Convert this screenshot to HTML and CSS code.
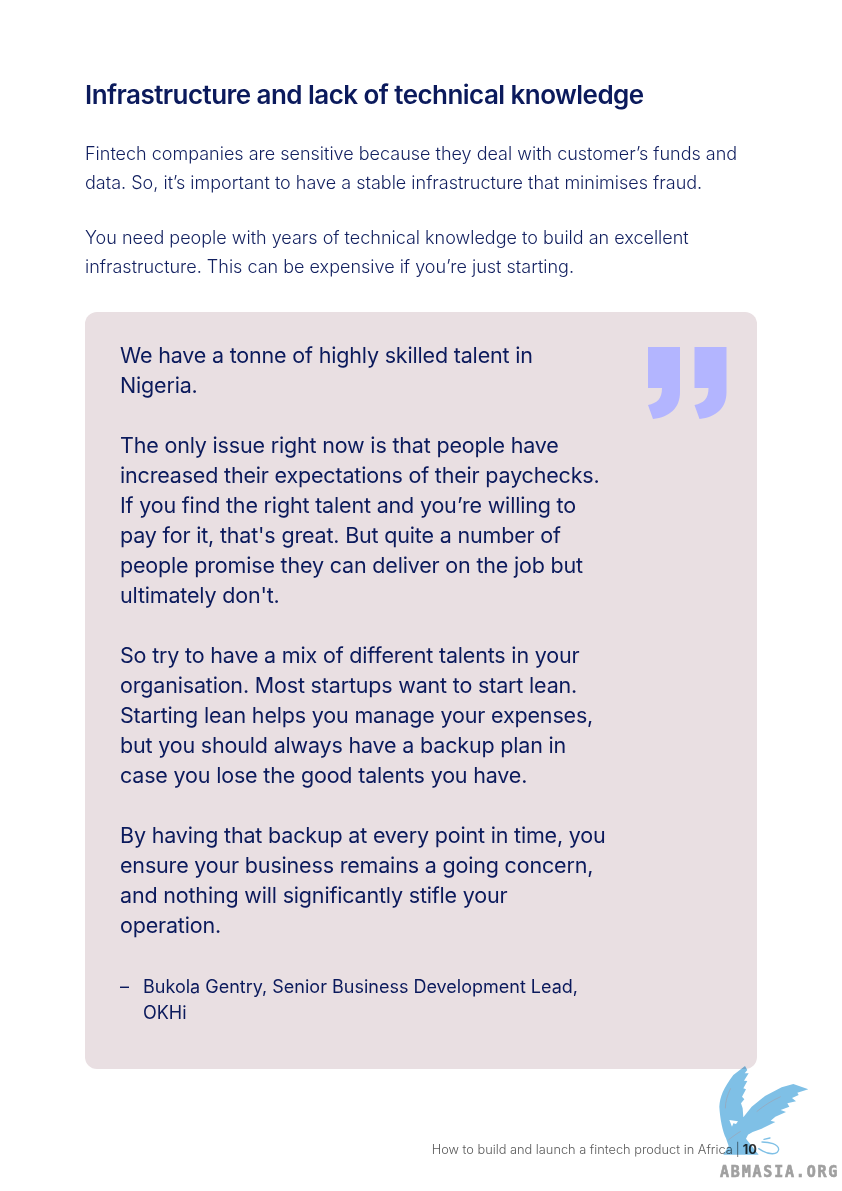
FILE: index.html
```html
<!DOCTYPE html>
<html lang="en">
<head>
    <meta charset="UTF-8">
    <title>How to build and launch a fintech product in Africa</title>
    <link rel="stylesheet" href="styles.css">
</head>
<body>
    <div class="page">
        <h1 class="title">Infrastructure and lack of technical knowledge</h1>

        <p class="intro">Fintech companies are sensitive because they deal with customer’s funds and<br>data. So, it’s important to have a stable infrastructure that minimises fraud.</p>
        <p class="intro">You need people with years of technical knowledge to build an excellent<br>infrastructure. This can be expensive if you’re just starting.</p>

        <div class="quoteCard">
            <div class="quoteBody">
                <p>We have a tonne of highly skilled talent in<br>Nigeria.</p>
                <p>The only issue right now is that people have<br>increased their expectations of their paychecks.<br>If you find the right talent and you’re willing to<br>pay for it, that's great. But quite a number of<br>people promise they can deliver on the job but<br>ultimately don't.</p>
                <p>So try to have a mix of different talents in your<br>organisation. Most startups want to start lean.<br>Starting lean helps you manage your expenses,<br>but you should always have a backup plan in<br>case you lose the good talents you have.</p>
                <p>By having that backup at every point in time, you<br>ensure your business remains a going concern,<br>and nothing will significantly stifle your<br>operation.</p>
                <div class="attribution">
                    <span class="dash">–</span>
                    <span>Bukola Gentry, Senior Business Development Lead,<br>OKHi</span>
                </div>
            </div>
            <svg class="quoteMark" viewBox="0 0 80 73" width="80" height="73">
                <path fill="#b3b5ff" d="M0 0H32V45C32 61 22 70 5 72L0 58C9 56 14 52 14 41H0Z"/>
                <path fill="#b3b5ff" d="M46.500 0H78.500V45C78.500 61 68.500 70 51.500 72L46.500 58C55.500 56 60.500 52 60.500 41H46.500Z"/>
            </svg>
        </div>

        <div class="footer">How to build and launch a fintech product in Africa<span class="pipe">|</span><b>10</b></div>
    </div>

    <!-- watermark sits over the page corner -->
    <div class="watermark">
        <svg viewBox="0 0 315 315" width="105" height="105">
            <path fill="#7fc0e6" d="M105 18L112 30L104 40L116 40L102 62L112 63L100 85L108 88L96 110L103 118L93 130L98 145L100 172L125 140L165 108L215 82L250 72L295 88L262 98L266 105L246 114L258 124L232 130L238 140L212 150L228 156L196 170L182 182L196 186L155 206L128 216L114 224L108 236L128 262L146 284H60L40 284L56 258L48 235C38 215 30 175 28 140C30 110 40 85 70 45Z"/>
            <path fill="none" stroke="#7fc0e6" stroke-width="4" stroke-linecap="round" d="M162 238L180 234M156 246C178 246 205 252 206 268C205 284 178 288 146 266"/>
            <path fill="#fff" d="M58 180L84 184L78 192L70 190L66 200Z"/>
            <path fill="none" stroke="#98a8bc" stroke-width="2.500" d="M62 85C52 105 46 125 46 145M140 155C160 138 185 122 212 110M55 240C70 228 82 220 92 214"/>
        </svg>
        <div class="watermarkText">ABMASIA.ORG</div>
    </div>
</body>
</html>
```

FILE: styles.css
```css
html, body {
    margin: 0;
    background-color: #fff;
}

.page {
    height: 1191px;
    box-sizing: border-box;
    padding: 78px 85px 0 85px;
    font-family: "Inter", "Liberation Sans", sans-serif;
    color: #0b1a5c;
    overflow: hidden;
}

.title {
    margin: 0 0 27px 0;
    font-size: 26px;
    line-height: 34px;
    font-weight: 600;
    letter-spacing: -0.55px;
}

.intro {
    margin: 0 0 26px 0;
    font-size: 18px;
    line-height: 29px;
    font-weight: 300;
    color: #111f5f;
}

.quoteCard {
    display: flex;
    justify-content: space-between;
    align-items: flex-start;
    height: 757px;
    box-sizing: border-box;
    margin-top: 31px;
    padding: 28px 29px 0 35px;
    background-color: #e9dfe2;
    border-radius: 12px;
}

.quoteBody p {
    margin: 0 0 30px 0;
    font-size: 21.5px;
    line-height: 30px;
    letter-spacing: -0.18px;
}

.quoteMark {
    margin-top: 7px;
}

.attribution {
    display: flex;
    gap: 13px;
    margin-top: 34px;
    font-size: 18px;
    line-height: 26px;
}

.dash {
    width: 10px;
}

.footer {
    margin-top: 72px;
    text-align: right;
    font-size: 12.8px;
    line-height: 18px;
    font-weight: 300;
    color: #5a5a5a;
}

.pipe {
    margin: 0 3px;
}

.footer b {
    font-weight: 700;
    color: #333;
}

.watermark {
    position: absolute;
    left: 710px;
    top: 1060px;
    width: 132px;
    mix-blend-mode: multiply;
}

.watermark svg {
    display: block;
}

.watermarkText {
    position: absolute;
    left: 10px;
    top: 103px;
    font-family: "DejaVu Sans Mono", monospace;
    font-weight: bold;
    font-size: 15px;
    line-height: 18px;
    letter-spacing: 1.8px;
    color: #a0a0a0;
    -webkit-text-stroke: 0.6px #a0a0a0;
}
```
